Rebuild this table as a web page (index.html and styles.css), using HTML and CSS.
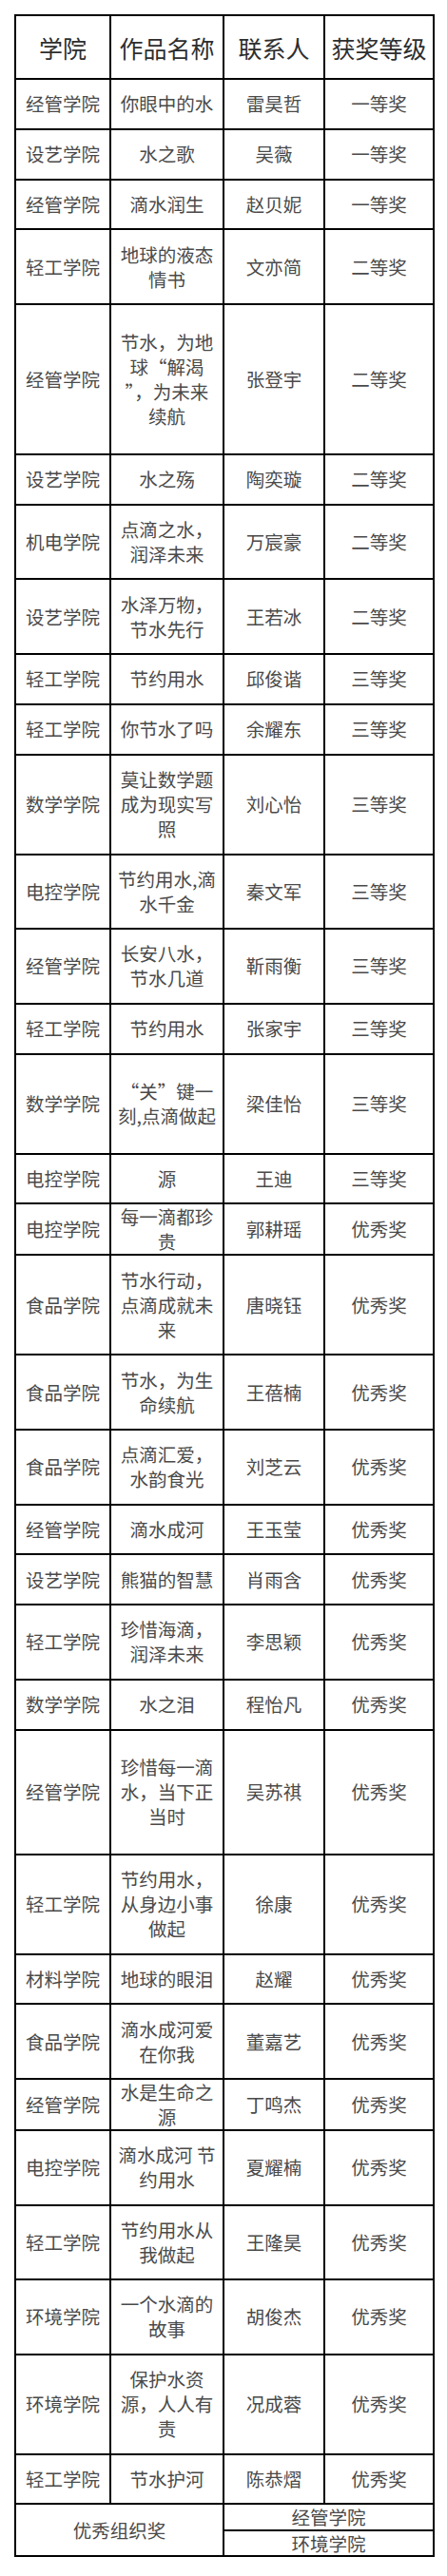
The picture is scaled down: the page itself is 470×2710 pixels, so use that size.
FILE: index.html
```html
<!DOCTYPE html>
<html lang="zh-CN">
<head>
<meta charset="utf-8">
<title>获奖名单</title>
<link rel="stylesheet" href="styles.css">
</head>
<body>
<table class="awards">
  <colgroup>
    <col class="c1"><col class="c2"><col class="c3"><col class="c4">
  </colgroup>
  <thead>
    <tr class="head"><th>学院</th><th>作品名称</th><th>联系人</th><th>获奖等级</th></tr>
  </thead>
  <tbody>
    <tr class="l1"><td>经管学院</td><td>你眼中的水</td><td>雷昊哲</td><td>一等奖</td></tr>
    <tr class="l1"><td>设艺学院</td><td>水之歌</td><td>吴薇</td><td>一等奖</td></tr>
    <tr class="l1"><td>经管学院</td><td>滴水润生</td><td>赵贝妮</td><td>一等奖</td></tr>
    <tr class="l2"><td>轻工学院</td><td>地球的液态<br>情书</td><td>文亦简</td><td>二等奖</td></tr>
    <tr class="l6"><td>经管学院</td><td>节水，为地<br>球“解渴<br>”，为未来<br>续航</td><td>张登宇</td><td>二等奖</td></tr>
    <tr class="l1"><td>设艺学院</td><td>水之殇</td><td>陶奕璇</td><td>二等奖</td></tr>
    <tr class="l2"><td>机电学院</td><td>点滴之水，<br>润泽未来</td><td>万宸豪</td><td>二等奖</td></tr>
    <tr class="l2"><td>设艺学院</td><td>水泽万物，<br>节水先行</td><td>王若冰</td><td>二等奖</td></tr>
    <tr class="l1"><td>轻工学院</td><td>节约用水</td><td>邱俊谐</td><td>三等奖</td></tr>
    <tr class="l1"><td>轻工学院</td><td>你节水了吗</td><td>余耀东</td><td>三等奖</td></tr>
    <tr class="l3"><td>数学学院</td><td>莫让数学题<br>成为现实写<br>照</td><td>刘心怡</td><td>三等奖</td></tr>
    <tr class="l2"><td>电控学院</td><td>节约用水,滴<br>水千金</td><td>秦文军</td><td>三等奖</td></tr>
    <tr class="l2"><td>经管学院</td><td>长安八水，<br>节水几道</td><td>靳雨衡</td><td>三等奖</td></tr>
    <tr class="l1"><td>轻工学院</td><td>节约用水</td><td>张家宇</td><td>三等奖</td></tr>
    <tr class="l3"><td>数学学院</td><td>“关”键一<br>刻,点滴做起</td><td>梁佳怡</td><td>三等奖</td></tr>
    <tr class="l1"><td>电控学院</td><td>源</td><td>王迪</td><td>三等奖</td></tr>
    <tr class="l1"><td>电控学院</td><td>每一滴都珍<br>贵</td><td>郭耕瑶</td><td>优秀奖</td></tr>
    <tr class="l3"><td>食品学院</td><td>节水行动，<br>点滴成就未<br>来</td><td>唐晓钰</td><td>优秀奖</td></tr>
    <tr class="l2"><td>食品学院</td><td>节水，为生<br>命续航</td><td>王蓓楠</td><td>优秀奖</td></tr>
    <tr class="l2"><td>食品学院</td><td>点滴汇爱，<br>水韵食光</td><td>刘芝云</td><td>优秀奖</td></tr>
    <tr class="l1"><td>经管学院</td><td>滴水成河</td><td>王玉莹</td><td>优秀奖</td></tr>
    <tr class="l1"><td>设艺学院</td><td>熊猫的智慧</td><td>肖雨含</td><td>优秀奖</td></tr>
    <tr class="l2"><td>轻工学院</td><td>珍惜海滴，<br>润泽未来</td><td>李思颖</td><td>优秀奖</td></tr>
    <tr class="l1"><td>数学学院</td><td>水之泪</td><td>程怡凡</td><td>优秀奖</td></tr>
    <tr class="l4"><td>经管学院</td><td>珍惜每一滴<br>水，当下正<br>当时</td><td>吴苏祺</td><td>优秀奖</td></tr>
    <tr class="l3"><td>轻工学院</td><td>节约用水，<br>从身边小事<br>做起</td><td>徐康</td><td>优秀奖</td></tr>
    <tr class="l1"><td>材料学院</td><td>地球的眼泪</td><td>赵耀</td><td>优秀奖</td></tr>
    <tr class="l2"><td>食品学院</td><td>滴水成河爱<br>在你我</td><td>董嘉艺</td><td>优秀奖</td></tr>
    <tr class="l1"><td>经管学院</td><td>水是生命之<br>源</td><td>丁鸣杰</td><td>优秀奖</td></tr>
    <tr class="l2"><td>电控学院</td><td>滴水成河 节<br>约用水</td><td>夏耀楠</td><td>优秀奖</td></tr>
    <tr class="l2"><td>轻工学院</td><td>节约用水从<br>我做起</td><td>王隆昊</td><td>优秀奖</td></tr>
    <tr class="l2"><td>环境学院</td><td>一个水滴的<br>故事</td><td>胡俊杰</td><td>优秀奖</td></tr>
    <tr class="l3"><td>环境学院</td><td>保护水资<br>源，人人有<br>责</td><td>况成蓉</td><td>优秀奖</td></tr>
    <tr class="l1"><td>轻工学院</td><td>节水护河</td><td>陈恭熠</td><td>优秀奖</td></tr>
    <tr class="sub1"><td colspan="2" rowspan="2">优秀组织奖</td><td colspan="2">经管学院</td></tr>
    <tr class="sub2"><td colspan="2">环境学院</td></tr>
  </tbody>
</table>
</body>
</html>
```

FILE: styles.css
```css
html, body {
  margin: 0;
  padding: 0;
  background: #ffffff;
}

body {
  padding: 15px 0 0 15px;
  font-family: "Noto Sans CJK SC", "Noto Sans", sans-serif;
}

.awards {
  border-collapse: collapse;
  table-layout: fixed;
  width: 440px;
  color: #4a4a4a;
}

.c1 { width: 100px; }
.c2 { width: 119px; }
.c3 { width: 106px; }
.c4 { width: 115px; }

.awards th,
.awards td {
  border: 2px solid #000;
  padding: 0;
  text-align: center;
  vertical-align: middle;
  white-space: nowrap;
  overflow: hidden;
}

.awards th {
  font-weight: normal;
  font-size: 25px;
  line-height: 30px;
  color: #2e2e2e;
}

.awards td {
  font-size: 19.5px;
  line-height: 26px;
}

.head { height: 67px; }
.l1 { height: 52.8px; }
.l2 { height: 78.6px; }
.l3 { height: 105px; }
.l4 { height: 131px; }
.l6 { height: 158px; }
.sub1 { height: 28px; }
.sub2 { height: 27px; }

.sub1 td, .sub2 td {
  line-height: 24px;
}
```
